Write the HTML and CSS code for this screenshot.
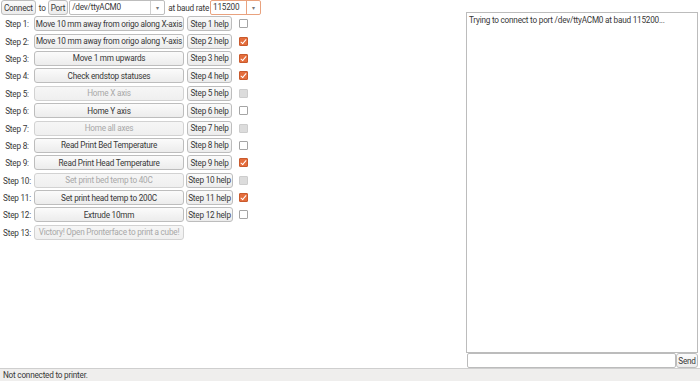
FILE: index.html
```html
<!DOCTYPE html>
<html>
<head>
<meta charset="utf-8">
<title>Printer setup wizard</title>
<link rel="stylesheet" href="styles.css">
</head>
<body>
<div id="frame">
    <div id="left">
        <div id="topbar">
            <span class="btn top-btn">Connect</span>
            <span class="lbl">to</span>
            <span class="btn top-btn">Port</span>
            <span class="combo port"><span class="combo-text">/dev/ttyACM0</span><span class="arrow">&#9662;</span></span>
            <span class="lbl">at baud rate</span>
            <span class="combo baud"><span class="combo-text">115200</span><span class="arrow hot">&#9662;</span></span>
        </div>
        <div id="steps">
            <span class="step">Step 1:</span><span class="btn main">Move 10 mm away from origo along X-axis</span><span class="help"><span class="btn">Step 1 help</span></span><span class="chk"></span>
            <span class="step">Step 2:</span><span class="btn main">Move 10 mm away from origo along Y-axis</span><span class="help"><span class="btn">Step 2 help</span></span><span class="chk on"></span>
            <span class="step">Step 3:</span><span class="btn main">Move 1 mm upwards</span><span class="help"><span class="btn">Step 3 help</span></span><span class="chk on"></span>
            <span class="step">Step 4:</span><span class="btn main">Check endstop statuses</span><span class="help"><span class="btn">Step 4 help</span></span><span class="chk on"></span>
            <span class="step">Step 5:</span><span class="btn main off">Home X axis</span><span class="help"><span class="btn">Step 5 help</span></span><span class="chk dis"></span>
            <span class="step">Step 6:</span><span class="btn main">Home Y axis</span><span class="help"><span class="btn">Step 6 help</span></span><span class="chk"></span>
            <span class="step">Step 7:</span><span class="btn main off">Home all axes</span><span class="help"><span class="btn">Step 7 help</span></span><span class="chk dis"></span>
            <span class="step">Step 8:</span><span class="btn main">Read Print Bed Temperature</span><span class="help"><span class="btn">Step 8 help</span></span><span class="chk"></span>
            <span class="step">Step 9:</span><span class="btn main">Read Print Head Temperature</span><span class="help"><span class="btn">Step 9 help</span></span><span class="chk on"></span>
            <span class="step">Step 10:</span><span class="btn main off">Set print bed temp to 40C</span><span class="help"><span class="btn wide">Step 10 help</span></span><span class="chk dis"></span>
            <span class="step">Step 11:</span><span class="btn main">Set print head temp to 200C</span><span class="help"><span class="btn wide">Step 11 help</span></span><span class="chk on"></span>
            <span class="step">Step 12:</span><span class="btn main">Extrude 10mm</span><span class="help"><span class="btn wide">Step 12 help</span></span><span class="chk"></span>
            <span class="step">Step 13:</span><span class="btn main off">Victory! Open Pronterface to print a cube!</span>
        </div>
    </div>
    <div id="right">
        <div id="log">Trying to connect to port /dev/ttyACM0 at baud 115200...</div>
        <div id="sendrow">
            <span id="cmd"></span>
            <span class="btn send">Send</span>
        </div>
    </div>
</div>
<div id="status">Not connected to printer.</div>
</body>
</html>
```

FILE: styles.css
```css
html, body {
    margin: 0;
    padding: 0;
    background: #ffffff;
}
body {
    width: 700px;
    height: 381px;
    font-family: Roboto, "Open Sans", sans-serif;
    font-size: 8.2px;
    letter-spacing: -0.22px;
    color: #383838;
    overflow: hidden;
}
#frame {
    display: flex;
    height: 368px;
}
#left {
    width: 466px;
}
#topbar {
    display: flex;
    align-items: center;
    height: 15px;
}
.btn {
    display: inline-flex;
    align-items: center;
    justify-content: center;
    box-sizing: border-box;
    height: 15px;
    padding: 0 2px;
    border: 1px solid #bdbdbd;
    border-radius: 3px;
    background: linear-gradient(#fbfbfb, #ececec);
    white-space: nowrap;
    overflow: hidden;
}
.top-btn {
    margin-left: 1px;
}
.lbl {
    margin: 0 1px 0 3px;
}
.combo {
    display: inline-flex;
    box-sizing: border-box;
    height: 15px;
    border: 1px solid #bdbdbd;
    border-radius: 2px;
    background: #ffffff;
}
.combo.port {
    width: 96px;
    margin-left: 1px;
}
.combo.baud {
    width: 51px;
    border-color: #e9a27e;
}
.combo-text {
    flex: 1;
    padding-left: 2px;
    line-height: 13px;
}
.arrow {
    width: 13px;
    border-left: 1px solid #d0d0d0;
    text-align: center;
    font-size: 6px;
    line-height: 13px;
    color: #777777;
}
.arrow.hot {
    border-left-color: #e9a27e;
}
#steps {
    display: grid;
    grid-template-columns: 34px 150px 51px 14px;
    grid-auto-rows: 17.4px;
    align-items: center;
}
.step {
    text-align: center;
    padding-top: 1px;
    white-space: nowrap;
}
.main {
    width: 150px;
}
.main.off {
    color: #a8a8a8;
    background: linear-gradient(#f6f6f6, #efefef);
    border-color: #d2d2d2;
}
.help {
    display: flex;
    justify-content: center;
}
.help .btn {
    width: 45px;
    padding: 0;
}
.help .btn.wide {
    width: 47px;
}
.chk {
    box-sizing: border-box;
    width: 9px;
    height: 9px;
    margin-left: 4px;
    border: 1px solid #a5a5a5;
    border-radius: 1px;
    background: #ffffff;
    position: relative;
}
.chk.on {
    background: #e46d3c;
    border-color: #c95a2c;
}
.chk.on::after {
    content: "";
    position: absolute;
    left: 2px;
    top: 0px;
    width: 2px;
    height: 5px;
    border: solid #ffffff;
    border-width: 0 1.5px 1.5px 0;
    transform: rotate(40deg);
}
.chk.dis {
    background: #dcdcdc;
    border-color: #cdcdcd;
}
#right {
    flex: 1;
    display: flex;
    flex-direction: column;
    padding-top: 12px;
    padding-right: 2px;
}
#log {
    flex: 1;
    border: 1px solid #bcbcbc;
    padding: 2px 2px;
    background: #ffffff;
}
#sendrow {
    display: flex;
    height: 15px;
    margin-left: 1px;
}
#cmd {
    flex: 1;
    box-sizing: border-box;
    border: 1px solid #bcbcbc;
    border-radius: 2px;
}
.send {
    width: 22px;
    padding: 0;
}
#status {
    box-sizing: border-box;
    height: 13px;
    border-top: 1px solid #cfcfcf;
    background: #efeeed;
    padding-left: 3px;
    line-height: 12px;
}
```
